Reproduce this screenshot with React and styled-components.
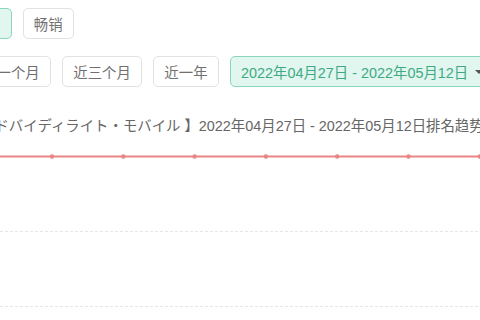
import React from "react";
import styled, { createGlobalStyle } from "styled-components";

const Global = createGlobalStyle`
  html, body { margin: 0; padding: 0; background: #fff; }
  body {
    width: 480px; height: 320px; overflow: hidden;
    font-family: "Liberation Sans", "Noto Sans CJK SC", "Noto Sans CJK JP", sans-serif;
  }
`;

const Page = styled.div`
  width: 480px;
  height: 320px;
  overflow: hidden;
  position: relative;
  padding-top: 8px;
  box-sizing: border-box;
`;

const Row = styled.div`
  display: flex;
  align-items: center;
  gap: ${(p) => p.$gap}px;
  margin-left: ${(p) => p.$offset}px;
  margin-bottom: ${(p) => p.$mb || 0}px;
  white-space: nowrap;
`;

const Btn = styled.button`
  height: 31px;
  padding: 0 ${(p) => p.$padR || 10}px 0 10px;
  box-sizing: border-box;
  border-radius: 5px;
  border: 1px solid ${(p) => (p.$active ? "#8ad6b9" : "#e2e2e2")};
  background: ${(p) => (p.$active ? "#e0f6ee" : "#fff")};
  color: ${(p) => (p.$active ? "#3fa985" : "#707070")};
  font-family: "Liberation Sans", "Noto Sans CJK SC", sans-serif;
  font-size: 14.4px;
  white-space: nowrap;
  display: flex;
  align-items: center;
  gap: 7px;
  flex-shrink: 0;
  cursor: pointer;
`;

const Caret = styled.span`
  width: 0;
  height: 0;
  border-left: 4px solid transparent;
  border-right: 4px solid transparent;
  border-top: 4px solid #555;
`;

const Title = styled.div`
  margin-left: ${(p) => p.$offset}px;
  margin-top: 28px;
  height: 22px;
  line-height: 22px;
  font-size: 14.4px;
  color: #666;
  white-space: nowrap;
  font-family: "Liberation Sans", "Noto Sans CJK JP", "Noto Sans CJK SC", sans-serif;
`;

const Chart = styled.svg`
  display: block;
  margin-top: 4px;
`;

const dots = [52, 123.3, 194.6, 265.9, 337.2, 408.5, 479.8];

export default function App() {
  return (
    <Page>
      <Global />
      <Row $offset={-154} $gap={11} $mb={17}>
        <Btn>免费榜</Btn>
        <Btn $active $padR={20}>付费榜单</Btn>
        <Btn>畅销</Btn>
      </Row>
      <Row $offset={-105.5} $gap={11.5}>
        <Btn>近七天</Btn>
        <Btn>近一个月</Btn>
        <Btn>近三个月</Btn>
        <Btn>近一年</Btn>
        <Btn $active>
          2022年04月27日 - 2022年05月12日
          <Caret />
        </Btn>
      </Row>
      <Title $offset={-20}>【ドバイディライト・モバイル 】2022年04月27日 - 2022年05月12日排名趋势</Title>
      <Chart width="480" height="180" viewBox="0 0 480 180">
        <line x1="0" y1="90.5" x2="480" y2="90.5" stroke="#e6e6e6" strokeWidth="1" strokeDasharray="3 2" />
        <line x1="0" y1="165.5" x2="480" y2="165.5" stroke="#e6e6e6" strokeWidth="1" strokeDasharray="3 2" />
        <line x1="0" y1="15.5" x2="480" y2="15.5" stroke="#e98585" strokeWidth="2" />
        {dots.map((x) => (
          <circle key={x} cx={x} cy="15.5" r="2.2" fill="#e98585" />
        ))}
      </Chart>
    </Page>
  );
}
